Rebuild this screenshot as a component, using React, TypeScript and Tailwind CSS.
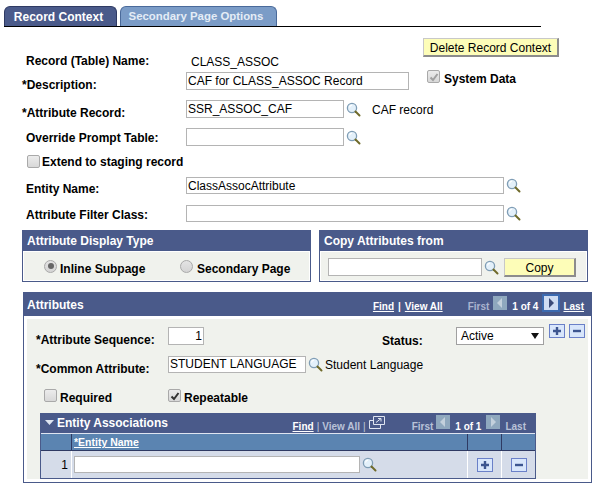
import React from 'react';

function Lookup({ className = '' }: { className?: string }) {
  return (
    <svg width="15" height="15" viewBox="0 0 15 15" className={`shrink-0 ${className}`}>
      <circle cx="6" cy="6" r="4.6" fill="#e3f0fa" stroke="#7f9db5" strokeWidth="1.3" />
      <path d="M3.5 5.5 A3 3 0 0 1 6 3" fill="none" stroke="#ffffff" strokeWidth="1.2" />
      <path d="M9.5 9.5 L13.5 13.5" stroke="#6f6a2a" strokeWidth="2" strokeLinecap="round" />
    </svg>
  );
}

function Check({ checked, disabled, className = '' }: { checked?: boolean; disabled?: boolean; className?: string }) {
  return (
    <span className={`flex h-[13px] w-[13px] shrink-0 items-center justify-center rounded-[2px] border border-[#a9a9a9] bg-gradient-to-b from-[#ececec] to-[#d8d8d8] ${className}`}>
      {checked && (
        <svg width="10" height="10" viewBox="0 0 10 10">
          <path d="M1.5 5.5 L4 8 L8.5 2" fill="none" stroke={disabled ? '#a0a0a0' : '#333333'} strokeWidth="2" />
        </svg>
      )}
    </span>
  );
}

function Radio({ checked }: { checked?: boolean }) {
  return (
    <span className="flex h-[13px] w-[13px] shrink-0 items-center justify-center rounded-full border border-[#a9a9a9] bg-gradient-to-b from-[#e4e4e4] to-[#d4d4d4]">
      {checked && <span className="h-[6px] w-[6px] rounded-full bg-[#666666]" />}
    </span>
  );
}

function Label({ children, offset = '' }: { children: React.ReactNode; offset?: string }) {
  return <div className={`w-[164px] shrink-0 text-[12px] font-bold text-black ${offset}`}>{children}</div>;
}

function TextInput({ value = '', width, right }: { value?: string; width: string; right?: boolean }) {
  return (
    <input
      readOnly
      value={value}
      className={`h-[18px] ${width} shrink-0 border border-[#b4b4b4] bg-white px-[1px] pb-[1px] text-[12px] text-black outline-none ${right ? 'text-right' : ''}`}
    />
  );
}

function IconBox({ minus, className = '' }: { minus?: boolean; className?: string }) {
  return (
    <span className={`flex h-[14px] w-[16px] shrink-0 items-center justify-center border border-[#6a80c8] bg-[#d8e6fb] ${className}`}>
      <svg width="10" height="10" viewBox="0 0 10 10">
        <path d={minus ? 'M1 5 H9' : 'M1 5 H9 M5 1 V9'} stroke="#3c5590" strokeWidth="2.4" />
      </svg>
    </span>
  );
}

function NavArrow({ dir, enabled, className = '' }: { dir: 'left' | 'right'; enabled?: boolean; className?: string }) {
  return (
    <span className={`flex h-[14px] w-[14px] shrink-0 items-center justify-center ${enabled ? 'bg-[#cfdcf2]' : 'bg-[#8fa8be]'} ${className}`}>
      <svg width="8" height="10" viewBox="0 0 8 10">
        <path d={dir === 'left' ? 'M6 0 V10 L1 5 Z' : 'M2 0 V10 L7 5 Z'} fill={enabled ? '#3b4a78' : '#c3d0dc'} />
      </svg>
    </span>
  );
}

function YellowButton({ children, className = '' }: { children: React.ReactNode; className?: string }) {
  return (
    <button className={`h-[19px] border border-t-[#c8c8c8] border-l-[#c8c8c8] border-r-2 border-b-2 border-r-[#8c8c8c] border-b-[#8c8c8c] bg-[#fdfdb8] text-[12px] text-black ${className}`}>
      {children}
    </button>
  );
}

export default function App() {
  return (
    <div className="h-[487px] w-[597px] overflow-hidden bg-white font-['Liberation_Sans',Arial,sans-serif] text-[12px] text-black">
      {/* Tabs */}
      <div className="ml-[4px] flex h-[27px] w-[537px] items-end gap-[3px] border-b border-black pt-[6px]">
        <div className="flex h-[20px] w-[113px] items-center justify-center rounded-t-[6px] border border-b-0 border-[#2f3a63] bg-[#4a5a8a] pr-[4px] text-[12px] font-bold text-white">
          Record Context
        </div>
        <div className="flex h-[20px] w-[157px] items-center justify-center rounded-t-[6px] border border-b-0 border-[#4a6a9a] bg-[#7b9cc7] pr-[5px] text-[11.4px] font-bold text-[#e4ecf6]">
          Secondary Page Options
        </div>
      </div>

      {/* Record fields */}
      <div className="flex h-[45px] pl-[26px]">
        <div className="mt-[25px] w-[165px] shrink-0 font-bold">Record (Table) Name:</div>
        <div className="mt-[26px] w-[232px] shrink-0">CLASS_ASSOC</div>
        <YellowButton className="mt-[11px] w-[136px]">Delete Record Context</YellowButton>
      </div>
      <div className="flex h-[18px] pl-[22px]">
        <Label offset="pt-[4px]">*Description:</Label>
        <TextInput value="CAF for CLASS_ASSOC Record" width="w-[223px]" />
        <div className="-mt-[2px] ml-[18px] flex gap-[4px]">
          <Check checked disabled />
          <span className="font-bold">System Data</span>
        </div>
      </div>
      <div className="mt-[10px] flex h-[18px] items-center pl-[22px]">
        <Label offset="pt-[8px]">*Attribute Record:</Label>
        <TextInput value="SSR_ASSOC_CAF" width="w-[158px]" />
        <Lookup className="ml-[2px]" />
        <span className="ml-[11px] pt-[2px]">CAF record</span>
      </div>
      <div className="mt-[10px] flex h-[18px] items-center pl-[26px]">
        <div className="w-[160px] shrink-0 pt-[1px] font-bold">Override Prompt Table:</div>
        <TextInput width="w-[158px]" />
        <Lookup className="ml-[2px]" />
      </div>
      <div className="mt-[9px] flex h-[13px] items-center gap-[2px] pl-[27px]">
        <Check />
        <span className="font-bold">Extend to staging record</span>
      </div>
      <div className="mt-[9px] flex h-[17px] items-center pl-[26px]">
        <div className="w-[160px] shrink-0 pt-[7px] font-bold">Entity Name:</div>
        <input readOnly value="ClassAssocAttribute" className="h-[17px] w-[318px] shrink-0 border border-[#b4b4b4] px-[1px] outline-none" />
        <Lookup className="ml-[2px]" />
      </div>
      <div className="mt-[11px] flex h-[17px] items-center pl-[26px]">
        <div className="w-[160px] shrink-0 pt-[2px] font-bold">Attribute Filter Class:</div>
        <input readOnly className="h-[17px] w-[318px] shrink-0 border border-[#b4b4b4] outline-none" />
        <Lookup className="ml-[2px]" />
      </div>

      {/* Two small panels */}
      <div className="mt-[8px] flex h-[52px] gap-[8px] pl-[22px]">
        <div className="flex w-[289px] flex-col border border-[#4a5a8a]">
          <div className="flex h-[20px] items-center bg-[#4a5a8a] pl-[4px] font-bold text-white">Attribute Display Type</div>
          <div className="m-[1px] flex flex-1 items-center bg-[#f0f2ed] pl-[20px]">
            <Radio checked />
            <span className="ml-[3px] w-[120px] pt-[6px] font-bold">Inline Subpage</span>
            <Radio />
            <span className="ml-[4px] pt-[6px] font-bold">Secondary Page</span>
          </div>
        </div>
        <div className="flex w-[269px] flex-col border border-[#4a5a8a]">
          <div className="flex h-[20px] items-center bg-[#4a5a8a] pl-[4px] font-bold text-white">Copy Attributes from</div>
          <div className="m-[1px] flex flex-1 items-center bg-[#f0f2ed] pl-[7px] pt-[2px]">
            <TextInput width="w-[154px]" />
            <Lookup className="ml-[2px]" />
            <YellowButton className="ml-[5px] w-[72px]">Copy</YellowButton>
          </div>
        </div>
      </div>

      {/* Attributes */}
      <div className="ml-[23px] mt-[10px] flex h-[191px] w-[569px] flex-col border border-[#4a5a8a]">
        <div className="flex h-[23px] shrink-0 items-center bg-[#4a5a8a] pl-[3px] pr-[7px] text-white">
          <span className="font-bold">Attributes</span>
          <div className="ml-auto flex items-center pt-[4px] text-[10px] font-bold">
            <span className="underline">Find</span>
            <span className="mx-[4px]">|</span>
            <span className="underline">View All</span>
            <span className="ml-[25px] text-[#aab4cf]">First</span>
            <NavArrow dir="left" className="ml-[4px] -translate-y-[4px]" />
            <span className="ml-[5px]">1 of 4</span>
            <NavArrow dir="right" enabled className="ml-[6px] -translate-y-[4px] outline-2 outline-[#3c6ab0]" />
            <span className="ml-[5px] underline">Last</span>
          </div>
        </div>
        <div className="m-[3px] flex-1 bg-[#f0f2ed] pt-[8px]">
          <div className="flex h-[18px] pl-[9px]">
            <div className="w-[132px] shrink-0 pt-[4px] font-bold">*Attribute Sequence:</div>
            <TextInput value="1" width="w-[36px]" right />
            <div className="ml-[178px] w-[74px] shrink-0 pt-[5px] font-bold">Status:</div>
            <div className="flex h-[18px] w-[88px] shrink-0 items-center justify-between border border-[#a0a0a0] bg-white pb-[1px] pl-[4px] pr-[4px]">
              <span>Active</span>
              <svg width="8" height="6" viewBox="0 0 8 6" className="mt-[1px]">
                <path d="M0 0 H8 L4 6 Z" fill="#111111" />
              </svg>
            </div>
            <IconBox className="ml-[5px] -translate-y-[3px]" />
            <IconBox minus className="ml-[4px] -translate-y-[3px]" />
          </div>
          <div className="mt-[11px] flex h-[17px] items-center pl-[9px]">
            <div className="w-[132px] shrink-0 pt-[8px] font-bold">*Common Attribute:</div>
            <input readOnly value="STUDENT LANGUAGE" className="h-[17px] w-[138px] shrink-0 border border-[#b4b4b4] bg-white px-[1px] pb-[2px] outline-none" />
            <Lookup className="ml-[2px]" />
            <span className="ml-[2px]">Student Language</span>
          </div>
          <div className="mt-[16px] flex h-[13px] pl-[17px]">
            <Check />
            <span className="ml-[3px] w-[108px] font-bold">Required</span>
            <Check checked />
            <span className="ml-[3px] font-bold">Repeatable</span>
          </div>

          {/* Entity Associations */}
          <div className="ml-[13px] mt-[11px] flex h-[66px] w-[496px] flex-col border-x border-b border-[#4a5a8a] bg-white">
            <div className="flex h-[20px] shrink-0 items-center bg-[#4a5a8a] pl-[4px] pr-[9px] text-white">
              <svg width="9" height="6" viewBox="0 0 9 6" className="mr-[3px]">
                <path d="M0 0 H9 L4.5 5 Z" fill="#dfe5f1" />
              </svg>
              <span className="font-bold">Entity Associations</span>
              <div className="ml-auto flex items-center pt-[6px] text-[10px] font-bold">
                <span className="underline">Find</span>
                <span className="mx-[3px] font-normal text-[#c3cbdf]">|</span>
                <span className="text-[#b9c2d8]">View All</span>
                <span className="mx-[3px] font-normal text-[#c3cbdf]">|</span>
                <svg width="16" height="13" viewBox="0 0 16 13" className="-translate-y-[4px]">
                  <path d="M4.5 0.5 H15.5 V8.5 H4.5 Z M0.5 4.5 H4.5 M0.5 4.5 V12.5 H11.5 V8.5 M7 6.5 L12 2.5 M9 2.5 H12 V5.5" fill="none" stroke="#dfe5f1" />
                </svg>
                <span className="ml-[27px] text-[#b9c2d8]">First</span>
                <NavArrow dir="left" className="ml-[3px] -translate-y-[4px]" />
                <span className="ml-[5px]">1 of 1</span>
                <NavArrow dir="right" className="ml-[5px] -translate-y-[4px]" />
                <span className="ml-[5px] text-[#b9c2d8]">Last</span>
              </div>
            </div>
            <div className="flex h-[18px] shrink-0 border-t border-b border-t-[#dfe5f1] border-b-[#2f3a63] bg-[#5b84b1]">
              <div className="w-[31px] shrink-0 border-r border-[#2f3a63]" />
              <div className="w-[396px] shrink-0 border-r border-[#2f3a63] pl-[2px] text-[10.5px] font-bold leading-[17px] text-white underline">*Entity Name</div>
              <div className="w-[34px] shrink-0 border-r border-[#2f3a63]" />
              <div className="flex-1" />
            </div>
            <div className="flex flex-1 bg-[#d5dce9]">
              <div className="w-[31px] shrink-0 border-r border-white pr-[3px] pt-[5px] text-right">1</div>
              <div className="flex w-[396px] shrink-0 items-center border-r border-white pl-[2px]">
                <input readOnly className="h-[17px] w-[286px] shrink-0 border border-[#b4b4b4] bg-white outline-none" />
                <Lookup className="ml-[2px]" />
              </div>
              <div className="flex w-[34px] shrink-0 items-center justify-center border-r border-white">
                <IconBox />
              </div>
              <div className="flex flex-1 items-center justify-center">
                <IconBox minus />
              </div>
            </div>
          </div>
        </div>
      </div>
    </div>
  );
}
